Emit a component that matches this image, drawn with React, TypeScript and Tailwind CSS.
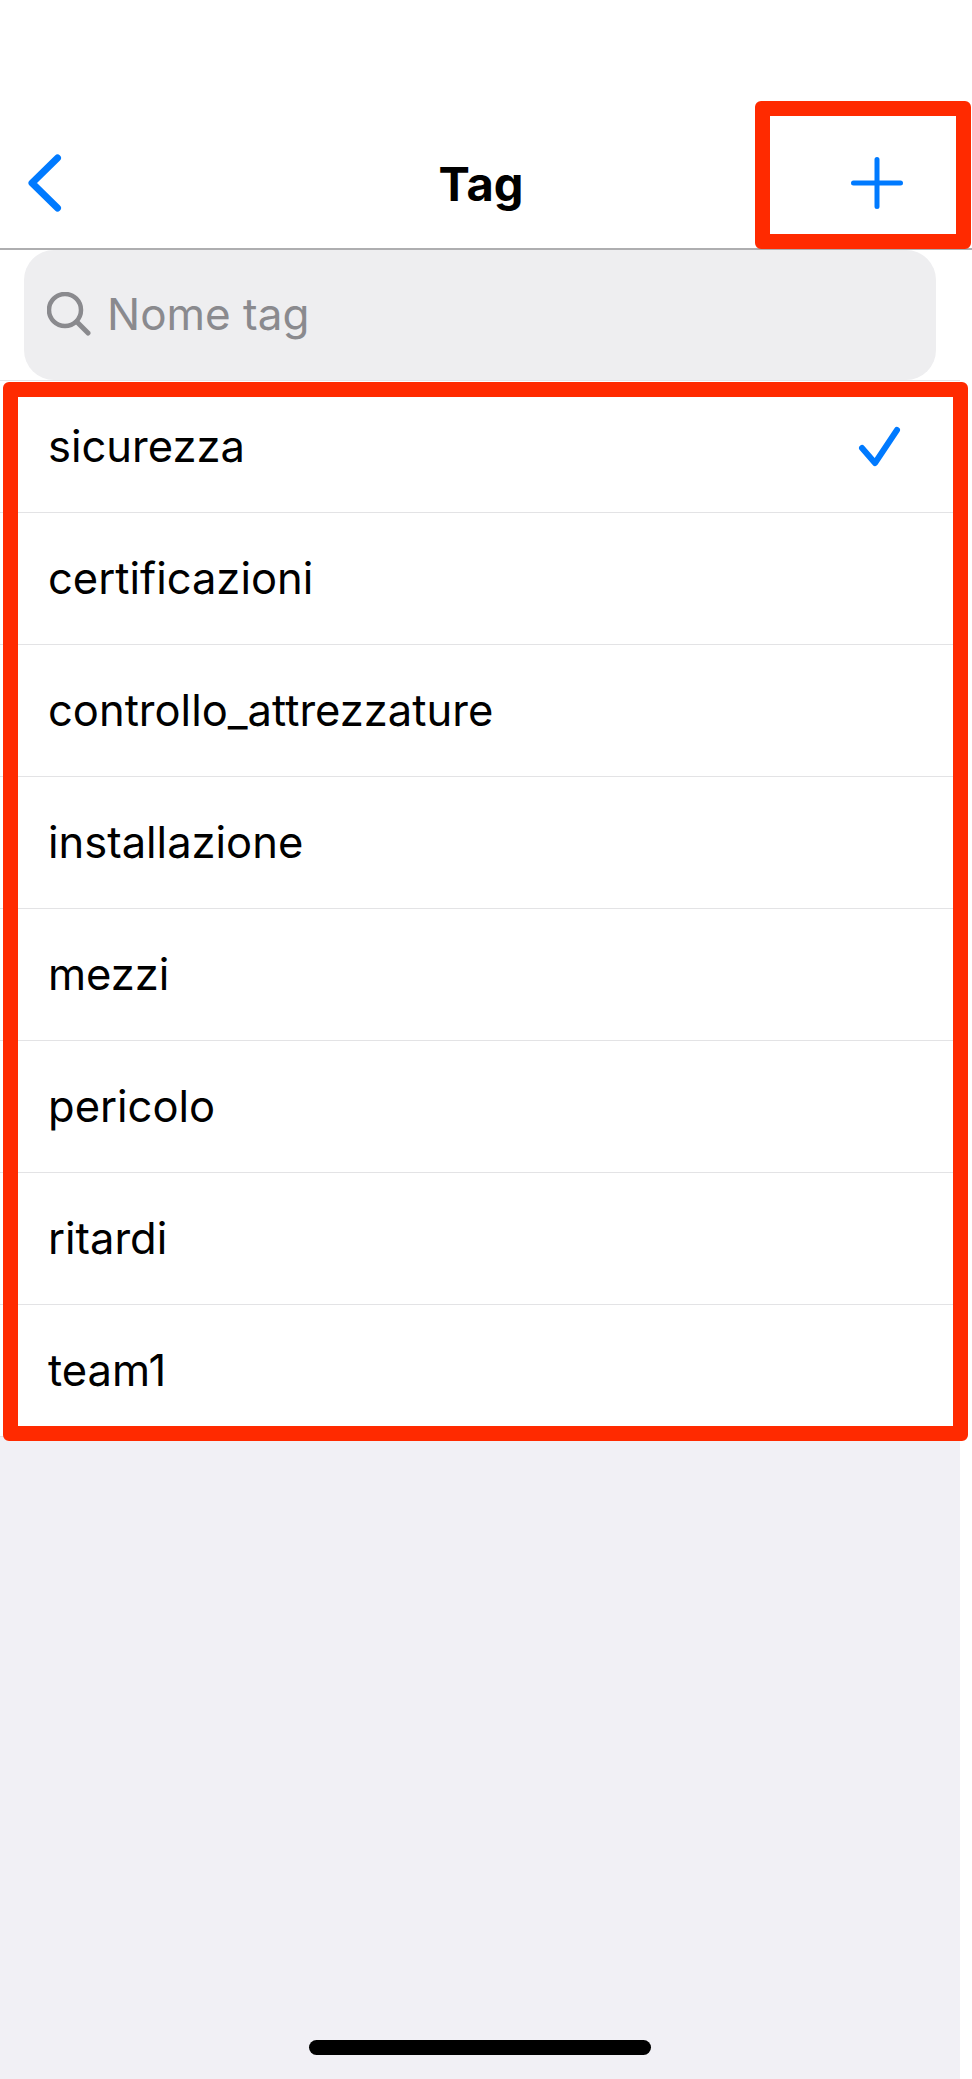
import React from 'react';

const tags = [
  'sicurezza',
  'certificazioni',
  'controllo_attrezzature',
  'installazione',
  'mezzi',
  'pericolo',
  'ritardi',
  'team1',
];

const App: React.FC = () => {
  return (
    <div className="relative h-[2079px] w-[972px] overflow-hidden bg-white font-['Inter',sans-serif] text-black">
      <div className="flex h-full w-[960px] flex-col">
        {/* Nav bar */}
        <header className="flex h-[250px] w-[972px] shrink-0 items-end border-b-2 border-[#aeaeb0] bg-white pb-[15px]">
          <div className="flex h-[100px] w-full items-center pl-[28px] pr-[38px]">
            <div className="flex flex-1 justify-start">
              <svg width="34" height="58" viewBox="0 0 34 58" fill="none">
                <path d="M29.5 4 L4 29 L29.5 54" stroke="#007aff" strokeWidth="7" strokeLinecap="round" strokeLinejoin="round" />
              </svg>
            </div>
            <span className="text-[47px] font-bold leading-none">Tag</span>
            <div className="flex flex-1 justify-end">
              <svg className="mr-[31px]" width="52" height="52" viewBox="0 0 52 52" fill="none">
                <path d="M26 2.5 V49.5 M2.5 26 H49.5" stroke="#007aff" strokeWidth="5" strokeLinecap="round" />
              </svg>
            </div>
          </div>
        </header>

        {/* Search */}
        <div className="shrink-0 border-b border-[#e5e5e7] bg-white">
          <div className="ml-[24px] flex h-[130px] w-[912px] items-center gap-[16px] rounded-[30px] bg-[#eeeef0] pb-[2px] pl-[23px]">
            <svg width="44" height="44" viewBox="0 0 44 44" fill="none">
              <circle cx="18" cy="18" r="16" stroke="#8a8a8e" strokeWidth="4.5" />
              <path d="M30 30 L41 41" stroke="#8a8a8e" strokeWidth="5" strokeLinecap="round" />
            </svg>
            <span className="text-[44px] leading-none text-[#8a8a8e]">Nome tag</span>
          </div>
        </div>

        {/* Tag list */}
        <ul className="shrink-0 bg-white">
          {tags.map((tag, index) => (
            <li
              key={tag}
              className="flex h-[132px] items-center justify-between border-b border-[#e3e3e5] pl-[48px] pr-[58px] text-[43.5px] leading-none"
            >
              <span>{tag}</span>
              {index === 0 && (
                <svg width="44" height="44" viewBox="0 0 44 44" fill="none">
                  <path d="M4 23 L17 38 L39 5" stroke="#007aff" strokeWidth="6" strokeLinecap="round" strokeLinejoin="round" />
                </svg>
              )}
            </li>
          ))}
        </ul>

        <div className="flex-1 bg-[#f1f0f5]" />
      </div>

      {/* Home indicator */}
      <div className="absolute left-[309px] top-[2040px] h-[15px] w-[342px] rounded-full bg-black" />

      {/* Red annotation boxes */}
      <div className="absolute left-[755px] top-[101px] h-[148px] w-[216px] rounded-[6px] border-[15px] border-[#ff2a00]" />
      <div className="absolute left-[3px] top-[382px] h-[1059px] w-[965px] rounded-[6px] border-[15px] border-[#ff2a00]" />
    </div>
  );
};

export default App;
